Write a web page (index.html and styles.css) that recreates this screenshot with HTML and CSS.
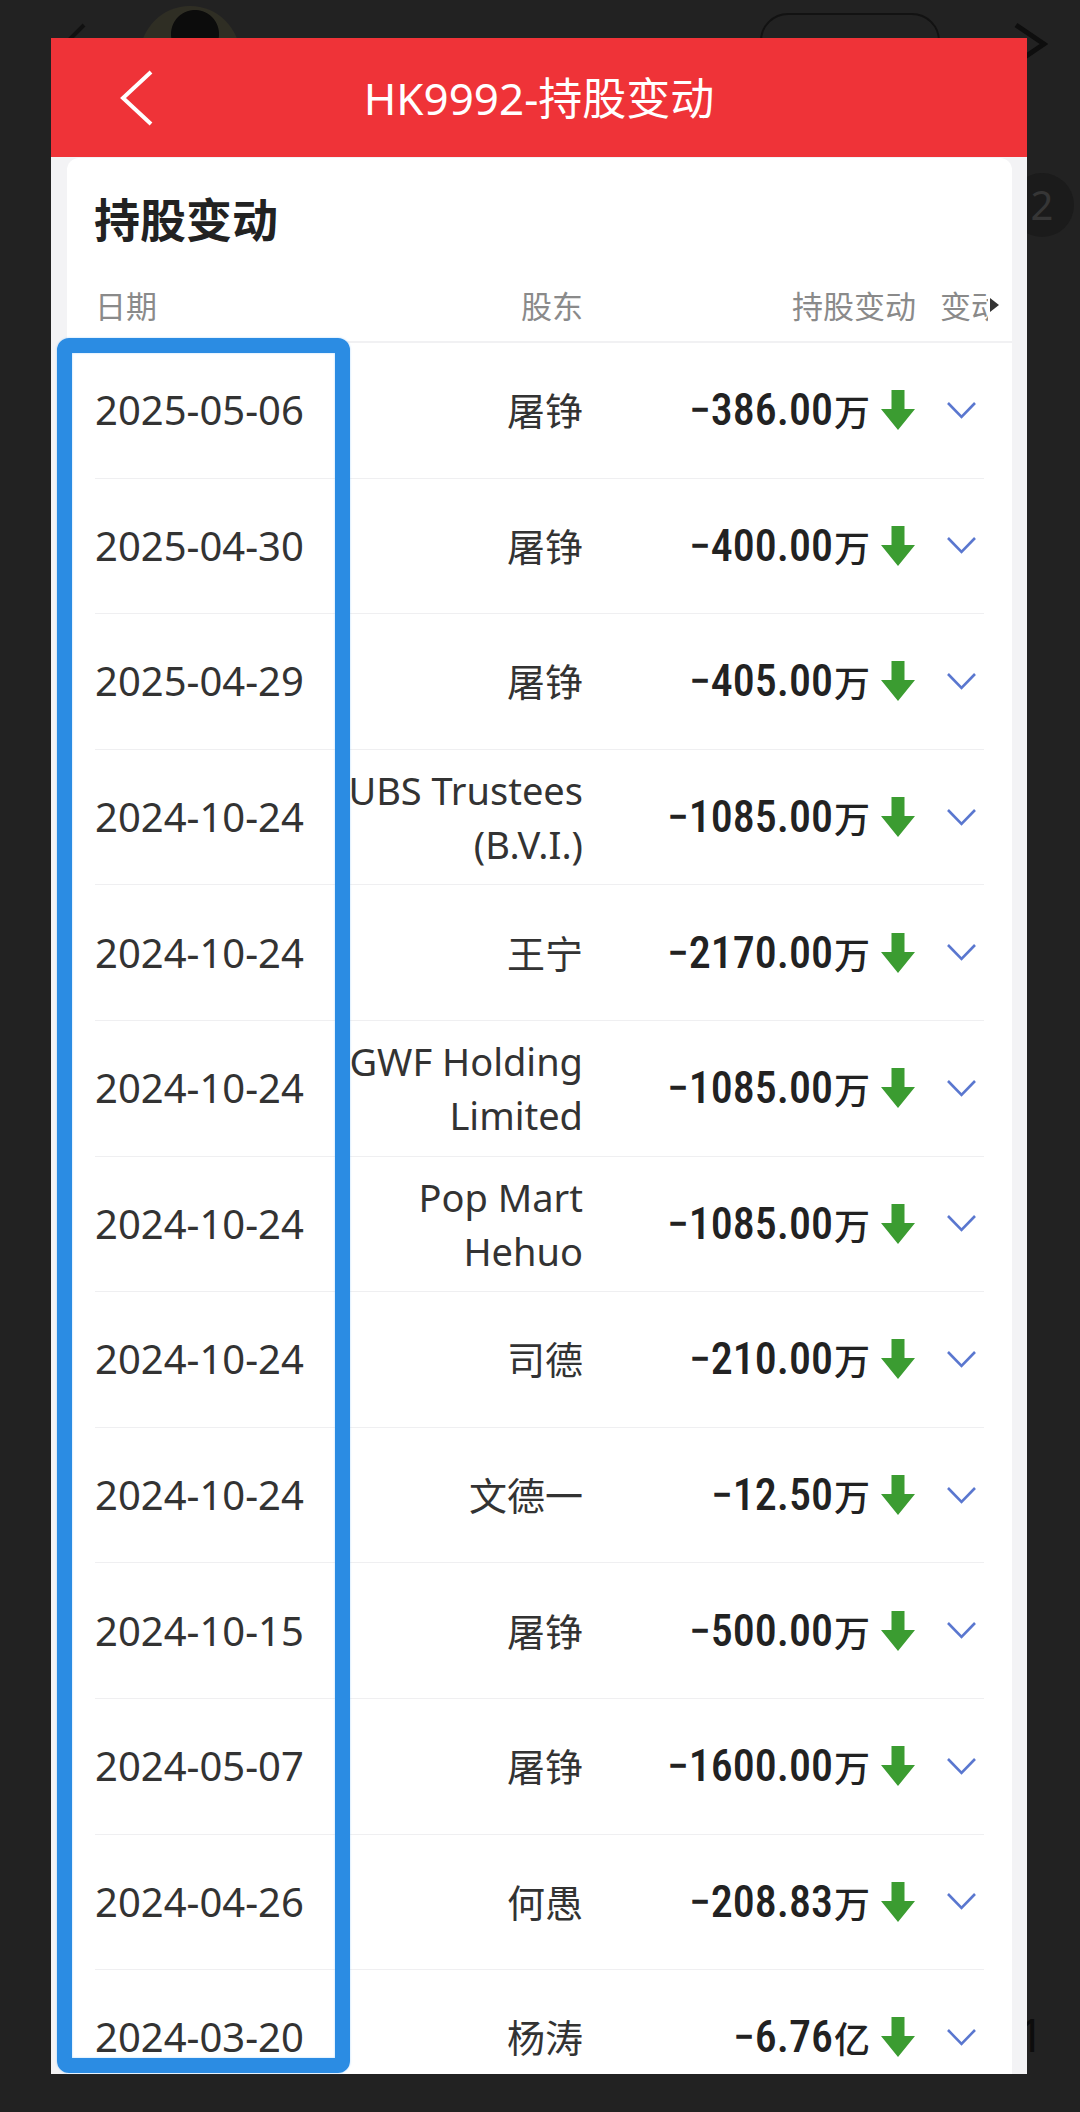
FILE: index.html
```html
<!DOCTYPE html>
<html lang="zh-CN">
<head>
<meta charset="utf-8">
<title>HK9992-持股变动</title>
<link rel="stylesheet" href="styles.css">
</head>
<body>
<div class="page">
  <div class="topbar">
    <svg class="bg-back" width="30" height="50" viewBox="0 0 30 50"><polyline points="26,3 4,25 26,47" fill="none" stroke="#111" stroke-width="4"/></svg>
    <div class="bg-avatar"></div>
    <div class="bg-name">我的节打印刷报告</div>
    <div class="bg-btn"></div>
    <svg class="bg-fwd" width="36" height="44" viewBox="0 0 36 44"><polyline points="4,3 32,22 4,41" fill="none" stroke="#0e0e0e" stroke-width="5"/></svg>
  </div>
  <div class="bg-badge">2</div>
  <div class="bg-spacer"></div>
  <div class="bg-num">1</div>
</div>

<div class="sheet">
  <div class="nav">
    <svg class="nav-back" width="34" height="56" viewBox="0 0 34 56"><polyline points="31,2 3,28 31,54" fill="none" stroke="#fff" stroke-width="4"/></svg>
    <div class="nav-title">HK9992-持股变动</div>
    <div></div>
  </div>
  <div class="card">
    <div class="card-title">持股变动</div>
    <div class="thead">
      <div class="th th-date">日期</div>
      <div class="th th-name">股东</div>
      <div class="th th-amt">持股变动</div>
      <div class="th th-more"><span class="clip">变动日期</span><span class="tri"></span></div>
    </div>
    <div class="rows">
      <div class="row"><div class="date">2025-05-06</div><div class="name">屠铮</div><div class="amt"><span class="num">−386.00</span><span class="unit">万</span><svg class="down" width="34" height="40" viewBox="0 0 34 40"><polygon points="10.5,0 23.5,0 23.5,19 34,19 17,40 0,19 10.5,19"/></svg></div><div class="more"><svg width="31" height="19" viewBox="0 0 31 19"><polyline points="2,2 15.5,16 29,2"/></svg></div></div>
      <div class="row"><div class="date">2025-04-30</div><div class="name">屠铮</div><div class="amt"><span class="num">−400.00</span><span class="unit">万</span><svg class="down" width="34" height="40" viewBox="0 0 34 40"><polygon points="10.5,0 23.5,0 23.5,19 34,19 17,40 0,19 10.5,19"/></svg></div><div class="more"><svg width="31" height="19" viewBox="0 0 31 19"><polyline points="2,2 15.5,16 29,2"/></svg></div></div>
      <div class="row"><div class="date">2025-04-29</div><div class="name">屠铮</div><div class="amt"><span class="num">−405.00</span><span class="unit">万</span><svg class="down" width="34" height="40" viewBox="0 0 34 40"><polygon points="10.5,0 23.5,0 23.5,19 34,19 17,40 0,19 10.5,19"/></svg></div><div class="more"><svg width="31" height="19" viewBox="0 0 31 19"><polyline points="2,2 15.5,16 29,2"/></svg></div></div>
      <div class="row"><div class="date">2024-10-24</div><div class="name">UBS Trustees<br>(B.V.I.)</div><div class="amt"><span class="num">−1085.00</span><span class="unit">万</span><svg class="down" width="34" height="40" viewBox="0 0 34 40"><polygon points="10.5,0 23.5,0 23.5,19 34,19 17,40 0,19 10.5,19"/></svg></div><div class="more"><svg width="31" height="19" viewBox="0 0 31 19"><polyline points="2,2 15.5,16 29,2"/></svg></div></div>
      <div class="row"><div class="date">2024-10-24</div><div class="name">王宁</div><div class="amt"><span class="num">−2170.00</span><span class="unit">万</span><svg class="down" width="34" height="40" viewBox="0 0 34 40"><polygon points="10.5,0 23.5,0 23.5,19 34,19 17,40 0,19 10.5,19"/></svg></div><div class="more"><svg width="31" height="19" viewBox="0 0 31 19"><polyline points="2,2 15.5,16 29,2"/></svg></div></div>
      <div class="row"><div class="date">2024-10-24</div><div class="name">GWF Holding<br>Limited</div><div class="amt"><span class="num">−1085.00</span><span class="unit">万</span><svg class="down" width="34" height="40" viewBox="0 0 34 40"><polygon points="10.5,0 23.5,0 23.5,19 34,19 17,40 0,19 10.5,19"/></svg></div><div class="more"><svg width="31" height="19" viewBox="0 0 31 19"><polyline points="2,2 15.5,16 29,2"/></svg></div></div>
      <div class="row"><div class="date">2024-10-24</div><div class="name">Pop Mart<br>Hehuo</div><div class="amt"><span class="num">−1085.00</span><span class="unit">万</span><svg class="down" width="34" height="40" viewBox="0 0 34 40"><polygon points="10.5,0 23.5,0 23.5,19 34,19 17,40 0,19 10.5,19"/></svg></div><div class="more"><svg width="31" height="19" viewBox="0 0 31 19"><polyline points="2,2 15.5,16 29,2"/></svg></div></div>
      <div class="row"><div class="date">2024-10-24</div><div class="name">司德</div><div class="amt"><span class="num">−210.00</span><span class="unit">万</span><svg class="down" width="34" height="40" viewBox="0 0 34 40"><polygon points="10.5,0 23.5,0 23.5,19 34,19 17,40 0,19 10.5,19"/></svg></div><div class="more"><svg width="31" height="19" viewBox="0 0 31 19"><polyline points="2,2 15.5,16 29,2"/></svg></div></div>
      <div class="row"><div class="date">2024-10-24</div><div class="name">文德一</div><div class="amt"><span class="num">−12.50</span><span class="unit">万</span><svg class="down" width="34" height="40" viewBox="0 0 34 40"><polygon points="10.5,0 23.5,0 23.5,19 34,19 17,40 0,19 10.5,19"/></svg></div><div class="more"><svg width="31" height="19" viewBox="0 0 31 19"><polyline points="2,2 15.5,16 29,2"/></svg></div></div>
      <div class="row"><div class="date">2024-10-15</div><div class="name">屠铮</div><div class="amt"><span class="num">−500.00</span><span class="unit">万</span><svg class="down" width="34" height="40" viewBox="0 0 34 40"><polygon points="10.5,0 23.5,0 23.5,19 34,19 17,40 0,19 10.5,19"/></svg></div><div class="more"><svg width="31" height="19" viewBox="0 0 31 19"><polyline points="2,2 15.5,16 29,2"/></svg></div></div>
      <div class="row"><div class="date">2024-05-07</div><div class="name">屠铮</div><div class="amt"><span class="num">−1600.00</span><span class="unit">万</span><svg class="down" width="34" height="40" viewBox="0 0 34 40"><polygon points="10.5,0 23.5,0 23.5,19 34,19 17,40 0,19 10.5,19"/></svg></div><div class="more"><svg width="31" height="19" viewBox="0 0 31 19"><polyline points="2,2 15.5,16 29,2"/></svg></div></div>
      <div class="row"><div class="date">2024-04-26</div><div class="name">何愚</div><div class="amt"><span class="num">−208.83</span><span class="unit">万</span><svg class="down" width="34" height="40" viewBox="0 0 34 40"><polygon points="10.5,0 23.5,0 23.5,19 34,19 17,40 0,19 10.5,19"/></svg></div><div class="more"><svg width="31" height="19" viewBox="0 0 31 19"><polyline points="2,2 15.5,16 29,2"/></svg></div></div>
      <div class="row"><div class="date">2024-03-20</div><div class="name">杨涛</div><div class="amt"><span class="num">−6.76</span><span class="unit">亿</span><svg class="down" width="34" height="40" viewBox="0 0 34 40"><polygon points="10.5,0 23.5,0 23.5,19 34,19 17,40 0,19 10.5,19"/></svg></div><div class="more"><svg width="31" height="19" viewBox="0 0 31 19"><polyline points="2,2 15.5,16 29,2"/></svg></div></div>
    </div>
  </div>
</div>

<div class="mark"></div>
</body>
</html>
```
FILE: styles.css
```css
html, body {
  margin: 0;
  padding: 0;
}
body {
  width: 1080px;
  height: 2112px;
  overflow: hidden;
  background: #222222;
  font-family: "Noto Sans", "Noto Sans CJK SC", sans-serif;
  position: relative;
}

/* background page under the sheet */
.page {
  height: 2112px;
  display: flex;
  flex-direction: column;
}
.topbar {
  display: flex;
  align-items: flex-start;
  height: 110px;
  padding-left: 58px;
}
.bg-back { margin-top: 22px; flex-shrink: 0; }
.bg-avatar {
  flex-shrink: 0;
  width: 100px;
  height: 100px;
  margin-left: 52px;
  margin-top: 6px;
  border-radius: 50%;
  background: radial-gradient(circle at 55% 28%, #0c0c0c 0 26%, #2f2e24 27% 60%, #262622 61%);
}
.bg-name {
  flex-shrink: 0;
  margin-left: 40px;
  margin-top: 32px;
  font-family: "Noto Sans CJK SC", sans-serif;
  font-size: 40px;
  line-height: 48px;
  color: #111;
  width: 330px;
  white-space: nowrap;
  overflow: hidden;
}
.bg-btn {
  flex-shrink: 0;
  margin-left: 150px;
  margin-top: 13px;
  width: 176px;
  height: 80px;
  border: 2px solid #121212;
  border-radius: 28px;
}
.bg-fwd {
  flex-shrink: 0;
  margin-left: 72px;
  margin-top: 22px;
}
.bg-badge {
  align-self: flex-end;
  margin-right: 6px;
  margin-top: 63px;
  width: 64px;
  height: 64px;
  border-radius: 50%;
  background: #1b1b1b;
  color: #363636;
  font-size: 40px;
  line-height: 64px;
  text-align: center;
}
.bg-spacer { flex: 1; }
.bg-num {
  align-self: flex-end;
  margin-right: 36px;
  margin-bottom: 50px;
  font-size: 46px;
  line-height: 56px;
  color: #0d0d0d;
}

/* modal sheet */
.sheet {
  position: absolute;
  left: 51px;
  top: 38px;
  width: 976px;
  height: 2036px;
  overflow: hidden;
  background: #f3f3f5;
}
.nav {
  height: 119px;
  background: #ef3338;
  display: grid;
  grid-template-columns: 1fr auto 1fr;
  align-items: center;
}
.nav-back {
  margin-left: 69px;
}
.nav-title {
  color: #fff;
  font-size: 44px;
  line-height: 56px;
  font-family: "Noto Sans", "Noto Sans CJK SC", sans-serif;
}
.card {
  margin: 1px 15px 0 16px;
  background: #fff;
  border-radius: 12px 12px 0 0;
  height: 2000px;
}
.card-title {
  padding: 31px 0 0 27px;
  font-family: "Noto Sans CJK SC", sans-serif;
  font-weight: 700;
  font-size: 46px;
  line-height: 56px;
  color: #222;
}
.thead {
  display: grid;
  grid-template-columns: 250px 238px 333px 68px;
  align-items: center;
  height: 98px;
  box-sizing: border-box;
  padding: 24px 28px 0;
  border-bottom: 2px solid #f1f1f3;
}
.th {
  font-family: "Noto Sans CJK SC", sans-serif;
  font-size: 31px;
  line-height: 40px;
  color: #8a8a8a;
}
.th-name, .th-amt { text-align: right; }
.th-more {
  display: flex;
  align-items: center;
  padding-left: 24px;
  white-space: nowrap;
}
.clip {
  flex-shrink: 0;
  display: inline-block;
  width: 48px;
  overflow: hidden;
  white-space: nowrap;
  color: #8a8a8a;
}
.tri {
  flex-shrink: 0;
  display: inline-block;
  margin-left: 2px;
  width: 0;
  height: 0;
  border-left: 9px solid #333;
  border-top: 7px solid transparent;
  border-bottom: 7px solid transparent;
}
.rows {
  padding: 0 28px;
}
.row {
  display: grid;
  grid-template-columns: 250px 238px 333px 68px;
  align-items: center;
  height: 135.6px;
  box-sizing: border-box;
  border-bottom: 1px solid #efeff1;
  color: #333;
}
.date {
  font-size: 40px;
  line-height: 54px;
  color: #333;
}
.name {
  text-align: right;
  font-size: 38px;
  line-height: 54px;
  white-space: nowrap;
  color: #333;
}
.amt {
  display: flex;
  justify-content: flex-end;
  align-items: center;
  padding-right: 1px;
  color: #222;
}
.num {
  font-family: "Liberation Sans Narrow", "Roboto Condensed", "Roboto", sans-serif;
  font-weight: 500;
  font-size: 44px;
  line-height: 54px;
}
.unit {
  font-family: "Noto Sans CJK SC", sans-serif;
  font-weight: 500;
  font-size: 36px;
  line-height: 54px;
  margin-left: 1px;
}
.down {
  margin-left: 11px;
  fill: #3b9c31;
}
.more {
  display: flex;
  justify-content: flex-end;
  align-items: center;
  padding-right: 7px;
}
.more svg polyline {
  fill: none;
  stroke: #5a77cf;
  stroke-width: 2.6;
}

/* blue annotation box drawn over the list */
.mark {
  position: absolute;
  left: 57px;
  top: 338px;
  width: 293px;
  height: 1735px;
  box-sizing: border-box;
  border: 15px solid #2b8ce3;
  border-radius: 12px;
  box-shadow: 0 0 2px rgba(120, 190, 255, 0.7), inset 0 0 2px rgba(120, 190, 255, 0.7);
}
```
